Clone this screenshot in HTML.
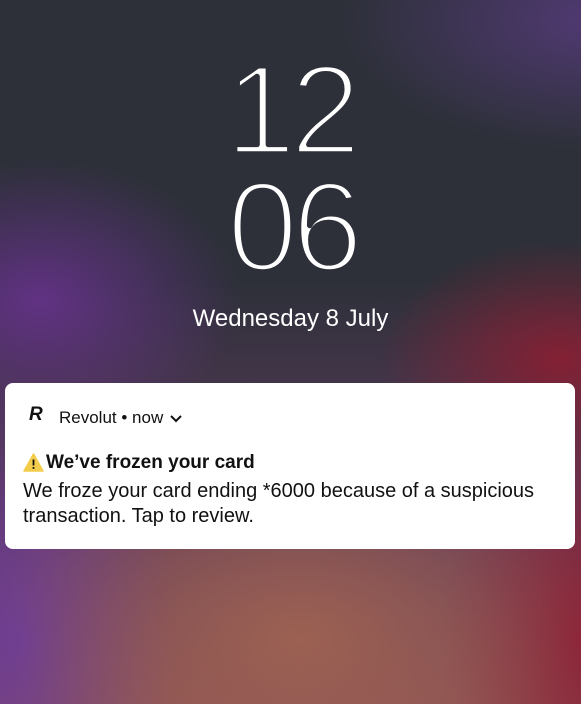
<!DOCTYPE html>
<html><head><style>
html,body{margin:0;padding:0}
body{width:581px;height:704px;overflow:hidden;position:relative;font-family:"Liberation Sans",sans-serif;
background:
radial-gradient(ellipse 200px 140px at 40px 300px,rgba(110,50,150,.8),transparent),
radial-gradient(ellipse 180px 120px at 560px 360px,rgba(140,30,50,.9),transparent),
radial-gradient(ellipse 260px 130px at 600px 20px,rgba(90,60,130,.8),transparent),
radial-gradient(ellipse 320px 220px at 300px 640px,#9c6152,transparent),
radial-gradient(ellipse 160px 260px at 20px 640px,#6a3a9a,transparent),
radial-gradient(ellipse 140px 260px at 580px 640px,#8a1e35,transparent),
linear-gradient(#2d3039 0,#2d3039 40%,#5a3a5a 70%,#8a5055 100%);}
.t{position:absolute;left:0;width:581px;text-align:center;color:#fff}
.card{position:absolute;left:5px;top:383px;width:570px;height:166px;background:#fff;border-radius:8px}
.hd{position:absolute;left:59px;top:408px;font-size:17px;color:#111}
.ti{position:absolute;left:46px;top:452px;font-size:19px;font-weight:bold;color:#111}
.bd{position:absolute;left:23px;top:479px;font-size:20px;line-height:25px;color:#111}
</style></head><body>
<svg style="position:absolute;left:0;top:0" width="581" height="300">
<g font-family="Liberation Sans" font-size="128" text-anchor="middle" fill="#fff" stroke="#2d3039" stroke-width="5.5" stroke-linejoin="round" letter-spacing="-6">
<text x="290" y="154">12</text>
<text x="292" y="271">06</text>
</g></svg>
<div class="t" style="top:305px;font-size:24px">Wednesday 8 July</div>
<div class="card"></div>
<div style="position:absolute;left:29px;top:404px;font-size:19px;font-weight:bold;font-style:italic;color:#111">R</div>
<div class="hd">Revolut • now <svg width="12" height="9" viewBox="0 0 12 9" style="margin-left:2px"><path d="M1 2l5 5 5-5" stroke="#111" stroke-width="2" fill="none"/></svg></div>
<svg style="position:absolute;left:23px;top:453px" width="21" height="19" viewBox="0 0 21 19"><path d="M10.5 1L20 18H1z" fill="#f2cc4a" stroke="#f2cc4a" stroke-linejoin="round" stroke-width="1.5"/><rect x="9.6" y="6.5" width="1.8" height="6" fill="#111"/><rect x="9.6" y="14" width="1.8" height="1.8" fill="#111"/></svg>
<div class="ti">We’ve frozen your card</div>
<div class="bd">We froze your card ending *6000 because of a suspicious<br>transaction. Tap to review.</div>
</body></html>
